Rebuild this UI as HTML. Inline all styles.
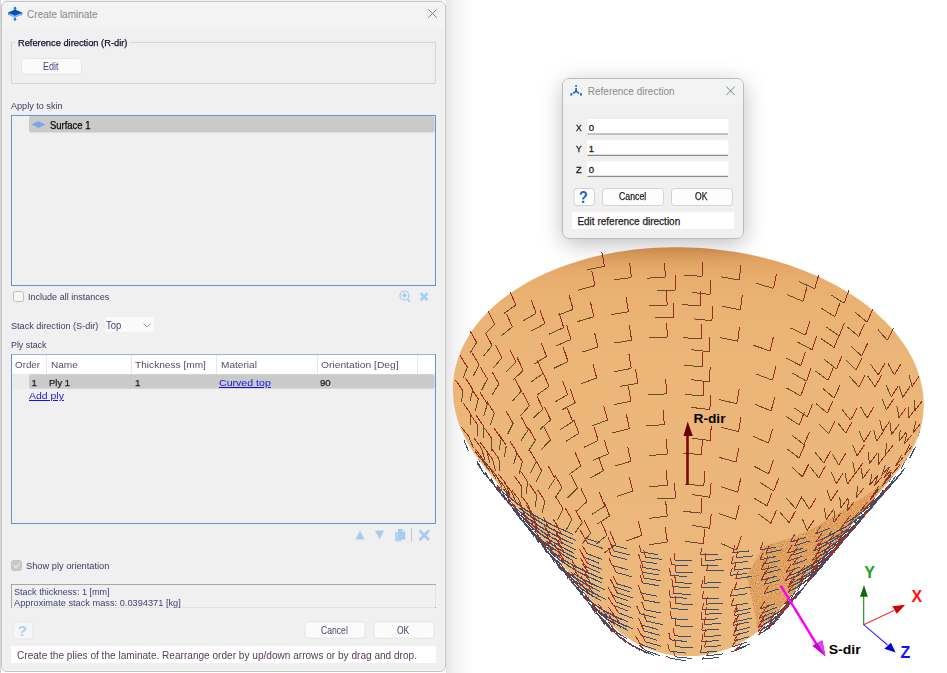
<!DOCTYPE html>
<html><head><meta charset="utf-8">
<style>
html,body{margin:0;padding:0;}
body{width:947px;height:673px;overflow:hidden;position:relative;background:#fff;font-family:"Liberation Sans", sans-serif;}
.t{position:absolute;white-space:pre;line-height:1;transform-origin:0 0;}
.abs{position:absolute;box-sizing:border-box;}
</style></head><body>
<div class="abs" style="left:446px;top:0;width:28px;height:673px;background:linear-gradient(to right,#e6e6e6,#efefef 20%,#f6f6f6 45%,rgba(255,255,255,0) 100%);"></div>
<svg class="abs" style="left:0;top:0" width="947" height="673" viewBox="0 0 947 673">
<defs>
 <linearGradient id="cg" x1="0" y1="246" x2="0" y2="660" gradientUnits="userSpaceOnUse">
  <stop offset="0" stop-color="#da9551"/>
  <stop offset="0.03" stop-color="#e1a260"/>
  <stop offset="0.07" stop-color="#e7ad6c"/>
  <stop offset="0.14" stop-color="#eab374"/>
  <stop offset="0.3" stop-color="#ebb678"/>
  <stop offset="1" stop-color="#ecb87c"/>
 </linearGradient>
 <clipPath id="cc"><path d="M479.8,461.1 L476.2,456.3 L472.9,451.5 L469.7,446.6 L466.9,441.6 L464.3,436.6 L461.9,431.5 L459.8,426.3 L458.0,421.2 L456.5,416.0 L455.2,410.8 L454.2,405.5 L453.5,400.3 L453.1,395.0 L452.9,389.8 L453.0,384.7 L453.4,379.6 L454.0,374.5 L455.0,369.4 L456.2,364.4 L457.7,359.4 L459.4,354.5 L461.4,349.6 L463.7,344.7 L466.3,340.0 L469.1,335.3 L472.1,330.6 L475.4,326.1 L479.0,321.6 L482.8,317.2 L486.9,312.9 L491.1,308.7 L495.7,304.6 L500.4,300.6 L505.4,296.8 L510.5,293.0 L515.9,289.4 L521.5,285.9 L527.3,282.5 L533.3,279.3 L539.4,276.2 L545.8,273.2 L552.3,270.4 L558.9,267.7 L565.7,265.2 L572.7,262.9 L579.8,260.7 L587.0,258.6 L594.3,256.7 L601.7,255.0 L609.3,253.5 L616.9,252.1 L624.6,250.9 L632.4,249.8 L640.3,249.0 L648.2,248.3 L656.2,247.7 L664.2,247.4 L672.2,247.2 L680.2,247.2 L688.3,247.4 L696.4,247.8 L704.4,248.3 L712.4,249.0 L720.4,249.9 L728.4,250.9 L736.3,252.1 L744.2,253.5 L752.0,255.1 L759.7,256.8 L767.3,258.7 L774.9,260.8 L782.3,263.0 L789.6,265.3 L796.8,267.9 L803.9,270.5 L810.9,273.4 L817.7,276.3 L824.3,279.4 L830.8,282.7 L837.2,286.1 L843.3,289.6 L849.3,293.2 L855.1,297.0 L860.7,300.8 L866.1,304.8 L871.2,308.9 L876.2,313.1 L880.9,317.4 L885.5,321.8 L889.7,326.3 L893.8,330.8 L897.6,335.5 L901.2,340.2 L904.5,345.0 L907.5,349.8 L910.3,354.7 L912.9,359.6 L915.2,364.6 L917.2,369.7 L918.9,374.7 L920.4,379.8 L921.6,384.9 L922.6,390.0 L923.2,395.1 L923.6,400.3 L923.7,405.4 L923.5,410.4 L923.1,415.3 L922.4,420.3 L921.4,425.2 L920.1,430.1 L918.6,435.0 L916.8,439.8 L914.7,444.6 L912.3,449.3 L909.7,454.0 L906.9,458.6 L903.7,463.1 L900.4,467.5 L896.8,471.9 L890.6,479.1 L884.4,486.3 L878.2,493.5 L872.0,500.7 L865.8,507.9 L859.7,515.1 L853.5,522.3 L847.3,529.6 L841.1,536.8 L834.9,544.1 L828.8,551.3 L822.6,558.6 L816.4,565.9 L810.2,573.2 L804.0,580.5 L797.9,587.8 L791.7,595.1 L785.5,602.5 L779.3,609.8 L773.1,617.1 L769.5,620.4 L766.2,623.9 L762.7,627.3 L759.0,630.5 L755.2,633.5 L751.3,636.4 L747.3,639.1 L743.2,641.6 L738.9,643.9 L734.6,646.0 L730.1,648.0 L725.6,649.7 L721.0,651.2 L716.4,652.6 L711.6,653.7 L706.9,654.6 L702.1,655.3 L697.3,655.9 L692.5,656.1 L687.6,656.2 L682.8,656.1 L677.9,655.7 L673.1,655.2 L668.3,654.4 L663.6,653.4 L658.9,652.2 L654.3,650.8 L649.7,649.2 L645.2,647.4 L640.8,645.4 L636.5,643.2 L632.2,640.9 L628.1,638.3 L624.1,635.6 L620.3,632.7 L616.5,629.6 L612.9,626.3 L609.5,622.9 L606.2,619.4 L603.5,615.4 L597.3,607.7 L591.1,600.1 L584.9,592.5 L578.7,584.8 L572.6,577.1 L566.4,569.5 L560.2,561.8 L554.0,554.1 L547.8,546.4 L541.7,538.7 L535.5,531.0 L529.3,523.2 L523.1,515.5 L516.9,507.8 L510.8,500.0 L504.6,492.2 L498.4,484.5 L492.2,476.7 L486.0,468.9 L479.8,461.1Z"/></clipPath>
 <clipPath id="pc"><path d="M747,575 L764,546 L788,539 L811,529.5 L835,515 L854,503 L873,491 L892,476 L940,476 L940,640 L760,640 Z"/></clipPath>
</defs>
<path d="M479.8,461.1 L476.2,456.3 L472.9,451.5 L469.7,446.6 L466.9,441.6 L464.3,436.6 L461.9,431.5 L459.8,426.3 L458.0,421.2 L456.5,416.0 L455.2,410.8 L454.2,405.5 L453.5,400.3 L453.1,395.0 L452.9,389.8 L453.0,384.7 L453.4,379.6 L454.0,374.5 L455.0,369.4 L456.2,364.4 L457.7,359.4 L459.4,354.5 L461.4,349.6 L463.7,344.7 L466.3,340.0 L469.1,335.3 L472.1,330.6 L475.4,326.1 L479.0,321.6 L482.8,317.2 L486.9,312.9 L491.1,308.7 L495.7,304.6 L500.4,300.6 L505.4,296.8 L510.5,293.0 L515.9,289.4 L521.5,285.9 L527.3,282.5 L533.3,279.3 L539.4,276.2 L545.8,273.2 L552.3,270.4 L558.9,267.7 L565.7,265.2 L572.7,262.9 L579.8,260.7 L587.0,258.6 L594.3,256.7 L601.7,255.0 L609.3,253.5 L616.9,252.1 L624.6,250.9 L632.4,249.8 L640.3,249.0 L648.2,248.3 L656.2,247.7 L664.2,247.4 L672.2,247.2 L680.2,247.2 L688.3,247.4 L696.4,247.8 L704.4,248.3 L712.4,249.0 L720.4,249.9 L728.4,250.9 L736.3,252.1 L744.2,253.5 L752.0,255.1 L759.7,256.8 L767.3,258.7 L774.9,260.8 L782.3,263.0 L789.6,265.3 L796.8,267.9 L803.9,270.5 L810.9,273.4 L817.7,276.3 L824.3,279.4 L830.8,282.7 L837.2,286.1 L843.3,289.6 L849.3,293.2 L855.1,297.0 L860.7,300.8 L866.1,304.8 L871.2,308.9 L876.2,313.1 L880.9,317.4 L885.5,321.8 L889.7,326.3 L893.8,330.8 L897.6,335.5 L901.2,340.2 L904.5,345.0 L907.5,349.8 L910.3,354.7 L912.9,359.6 L915.2,364.6 L917.2,369.7 L918.9,374.7 L920.4,379.8 L921.6,384.9 L922.6,390.0 L923.2,395.1 L923.6,400.3 L923.7,405.4 L923.5,410.4 L923.1,415.3 L922.4,420.3 L921.4,425.2 L920.1,430.1 L918.6,435.0 L916.8,439.8 L914.7,444.6 L912.3,449.3 L909.7,454.0 L906.9,458.6 L903.7,463.1 L900.4,467.5 L896.8,471.9 L890.6,479.1 L884.4,486.3 L878.2,493.5 L872.0,500.7 L865.8,507.9 L859.7,515.1 L853.5,522.3 L847.3,529.6 L841.1,536.8 L834.9,544.1 L828.8,551.3 L822.6,558.6 L816.4,565.9 L810.2,573.2 L804.0,580.5 L797.9,587.8 L791.7,595.1 L785.5,602.5 L779.3,609.8 L773.1,617.1 L769.5,620.4 L766.2,623.9 L762.7,627.3 L759.0,630.5 L755.2,633.5 L751.3,636.4 L747.3,639.1 L743.2,641.6 L738.9,643.9 L734.6,646.0 L730.1,648.0 L725.6,649.7 L721.0,651.2 L716.4,652.6 L711.6,653.7 L706.9,654.6 L702.1,655.3 L697.3,655.9 L692.5,656.1 L687.6,656.2 L682.8,656.1 L677.9,655.7 L673.1,655.2 L668.3,654.4 L663.6,653.4 L658.9,652.2 L654.3,650.8 L649.7,649.2 L645.2,647.4 L640.8,645.4 L636.5,643.2 L632.2,640.9 L628.1,638.3 L624.1,635.6 L620.3,632.7 L616.5,629.6 L612.9,626.3 L609.5,622.9 L606.2,619.4 L603.5,615.4 L597.3,607.7 L591.1,600.1 L584.9,592.5 L578.7,584.8 L572.6,577.1 L566.4,569.5 L560.2,561.8 L554.0,554.1 L547.8,546.4 L541.7,538.7 L535.5,531.0 L529.3,523.2 L523.1,515.5 L516.9,507.8 L510.8,500.0 L504.6,492.2 L498.4,484.5 L492.2,476.7 L486.0,468.9 L479.8,461.1Z" fill="url(#cg)"/>
<filter id="spk" x="740" y="470" width="200" height="170" filterUnits="userSpaceOnUse" primitiveUnits="userSpaceOnUse" color-interpolation-filters="sRGB">
 <feTurbulence type="fractalNoise" baseFrequency="0.9" numOctaves="1" seed="3" result="n"/>
 <feColorMatrix in="n" type="matrix" values="0 0 0 0 0.80  0 0 0 0 0.50  0 0 0 0 0.22  0 0 0 -3 1.75" />
</filter>
<g clip-path="url(#cc)">
 <path d="M747,575 L764,546 L788,539 L811,529.5 L835,515 L854,503 L873,491 L892,476 L940,476 L940,640 L760,640 Z" fill="#dc9a55" opacity="0.3"/>
 <g clip-path="url(#pc)"><rect x="740" y="470" width="200" height="170" filter="url(#spk)"/></g>
</g>
<g fill="none" stroke-width="1" stroke-linecap="butt" shape-rendering="crispEdges">
 <path d="M702.5,276.4L684.1,275.0 M739.2,280.1L721.2,276.8 M773.5,288.5L756.5,283.3 M803.0,301.4L787.2,294.7 M834.9,316.6L821.2,308.3 M858.7,336.4L847.2,326.9 M894.4,374.9L888.0,363.6 M902.7,397.5L899.1,385.8 M908.4,418.4L908.0,406.9 M904.2,444.2L906.9,432.9 M895.8,465.9L901.5,455.1 M882.1,485.9L890.6,475.9 M482.1,457.8L488.4,469.3 M470.3,413.1L470.6,425.2 M472.9,389.4L470.0,401.1 M479.1,364.7L473.4,375.7 M492.1,345.5L483.8,355.8 M512.3,326.8L501.2,335.9 M536.2,313.3L522.9,321.0 M595.0,285.6L578.3,290.1 M631.5,277.5L613.6,279.9 M665.3,277.5L647.0,278.1 M814.7,288.8L799.3,281.7 M844.1,303.2L830.6,294.7 M867.0,322.2L855.5,312.5 M887.2,340.2L878.1,329.7 M912.2,386.3L908.9,374.7 M914.4,411.4L914.1,399.7 M913.1,432.7L915.8,421.4 M904.7,454.8L910.2,444.0 M891.8,474.5L900.1,464.4 M481.9,460.0L489.6,471.1 M468.7,436.5L473.6,448.2 M462.7,390.5L461.6,402.4 M467.3,367.0L463.2,378.3 M476.7,342.6L469.8,353.3 M494.7,324.1L485.1,333.9 M515.8,305.1L503.7,313.6 M604.5,266.2L587.3,269.9 M700.5,305.9L682.1,304.6 M740.4,309.9L722.5,306.3 M805.5,335.2L790.4,327.9 M834.1,347.5L821.1,338.8 M856.1,369.9L845.7,359.8 M875.1,386.7L867.4,375.8 M886.5,409.9L881.9,398.4 M891.4,434.7L890.2,423.2 M884.1,478.2L889.4,467.2 M870.1,499.8L878.4,489.7 M495.9,475.3L502.1,486.7 M487.0,451.5L489.8,463.4 M483.6,426.1L483.1,438.1 M487.4,404.0L483.8,415.7 M499.0,383.9L492.2,394.7 M516.0,362.2L506.2,371.8 M563.7,327.6L549.0,334.2 M593.9,316.7L577.5,321.6 M628.4,311.8L610.7,314.7 M667.2,305.4L648.8,306.0 M710.2,294.4L691.8,292.5 M839.2,335.8L826.2,327.0 M861.5,356.0L850.9,346.0 M878.3,374.9L870.3,364.0 M891.3,396.9L886.2,385.4 M899.0,417.6L896.9,406.1 M899.1,441.2L900.2,429.8 M884.0,482.6L891.2,472.1 M489.8,468.1L496.3,479.5 M481.2,447.7L484.9,459.6 M477.2,424.2L477.7,436.2 M478.2,398.8L475.5,410.6 M487.4,379.0L481.7,390.0 M502.1,357.7L493.4,367.7 M544.9,323.6L531.4,331.1 M573.1,309.4L557.6,315.3 M675.5,290.1L657.1,290.2 M701.5,339.0L683.0,337.6 M737.7,341.2L719.8,337.6 M770.2,351.0L753.5,345.3 M800.9,365.7L786.0,358.1 M828.1,380.3L815.6,371.2 M867.1,417.9L860.6,406.9 M876.6,441.2L873.6,429.8 M878.3,464.4L878.8,452.9 M874.3,485.9L878.2,474.7 M505.3,483.0L509.9,494.7 M498.9,458.7L500.0,470.7 M501.2,438.7L499.0,450.5 M521.3,391.1L512.4,401.2 M542.9,373.5L531.0,382.1 M568.0,361.4L553.7,368.4 M598.1,347.1L581.8,352.2 M631.6,340.2L613.9,343.1 M667.4,337.3L649.0,338.0 M711.9,320.8L693.5,318.8 M812.1,349.8L797.6,342.0 M836.5,368.9L824.3,359.6 M858.9,386.9L849.5,376.4 M882.7,431.4L879.6,419.9 M885.7,454.7L886.3,443.2 M881.7,475.7L885.4,464.5 M871.6,496.9L878.5,486.4 M503.6,485.6L510.1,497.0 M492.7,459.3L495.6,471.2 M492.0,438.9L491.6,450.9 M494.3,413.2L490.5,424.8 M523.3,370.4L513.1,379.9 M546.5,356.3L533.7,364.3 M571.0,339.4L556.1,345.9 M673.9,317.6L655.5,317.9 M702.3,366.8L683.8,365.2 M772.5,380.2L756.2,374.1 M800.8,396.0L786.6,388.0 M827.3,413.2L816.1,403.6 M845.7,433.1L837.6,422.5 M857.1,456.0L852.6,444.6 M862.3,479.0L861.7,467.5 M519.0,499.6L523.3,511.3 M517.1,452.4L513.7,464.0 M528.3,429.8L521.0,440.6 M543.0,409.0L532.6,418.6 M567.7,394.5L554.4,402.3 M596.7,378.1L581.0,383.7 M631.3,368.5L613.8,371.7 M709.1,351.6L690.7,349.7 M806.5,381.2L792.4,373.1 M834.1,398.1L822.8,388.4 M850.5,420.2L842.2,409.6 M863.7,442.0L858.9,430.7 M869.5,463.6L868.1,452.1 M869.6,485.4L872.0,474.0 M511.7,492.1L516.6,503.7 M506.4,445.5L504.1,457.3 M513.1,423.3L507.5,434.5 M529.3,405.8L520.3,416.0 M549.0,386.5L537.0,395.1 M703.0,396.0L684.6,394.3 M736.8,403.7L719.2,399.6 M771.1,410.9L755.2,404.4 M799.4,425.0L786.0,416.5 M838.7,464.9L832.3,453.8 M847.6,484.1L844.8,472.6 M847.0,511.0L848.8,499.5 M528.9,506.2L531.4,518.1 M527.8,481.9L526.1,493.8 M536.3,461.5L530.5,472.7 M550.4,440.1L540.9,450.0 M572.6,421.7L559.8,429.9 M631.0,401.1L613.7,404.8 M666.6,393.9L648.3,394.8 M709.3,381.8L690.9,379.7 M807.4,416.8L794.4,408.1 M828.8,433.6L818.8,423.5 M855.4,473.6L852.7,462.1 M856.3,497.5L857.7,486.0 M521.5,486.1L521.9,498.1 M522.4,461.7L519.1,473.4 M535.5,440.5L528.0,451.3 M550.6,419.9L540.0,429.4 M575.1,402.7L561.4,410.2 M637.8,383.4L620.1,386.4 M738.5,431.7L721.1,427.2 M768.4,443.1L753.0,436.2 M799.0,458.0L786.9,448.9 M818.8,477.9L810.6,467.3 M830.7,500.9L826.9,489.4 M833.8,522.4L834.4,510.9 M544.9,501.0L542.2,512.8 M555.2,478.6L547.9,489.4 M598.3,440.5L583.8,447.4 M629.3,428.6L612.4,432.8 M664.3,424.6L646.1,426.0 M709.8,409.6L691.5,407.4 M804.0,444.5L791.9,435.4 M823.9,463.1L815.2,452.7 M836.3,483.6L831.4,472.3 M840.4,508.4L839.9,496.8 M536.8,495.2L535.1,507.1 M541.7,470.6L536.0,481.8 M578.9,433.3L565.9,441.4 M607.6,420.1L591.8,425.9 M701.6,454.7L683.2,453.0 M736.1,462.0L718.9,457.3 M768.6,473.8L754.0,466.2 M809.4,509.2L802.5,498.2 M563.1,508.8L557.6,520.1 M577.4,488.1L567.5,497.9 M603.5,470.9L589.4,478.2 M631.0,461.3L614.4,466.1 M667.4,454.1L649.2,455.5 M710.1,440.6L691.8,438.2 M802.4,476.8L791.8,467.0 M826.3,519.4L824.4,507.9 M562.0,487.8L554.5,498.5 M580.8,465.8L569.0,474.7 M608.5,453.8L593.4,460.3 M703.8,486.0L685.4,484.0 M737.7,492.1L721.0,486.7 M767.0,506.0L753.5,497.7 M789.2,522.7L780.0,512.4 M582.3,522.7L574.6,533.3 M604.8,506.1L592.0,514.4 M632.8,491.1L616.5,496.4 M667.5,485.1L649.3,486.8 M773.7,491.1L760.3,482.7 M795.7,508.6L786.4,498.3 M807.1,530.5L802.5,519.2 M571.9,519.5L565.8,530.7 M587.0,501.5L576.6,511.1 M701.1,513.1L682.7,511.2 M735.6,519.3L719.2,513.6 M607.1,535.1L595.9,544.3 M667.2,516.2L649.2,518.3 M709.8,497.2L691.7,494.5 M770.8,523.2L758.7,514.1 M590.6,533.1L582.3,543.6 M609.6,516.0L596.8,524.3 M675.4,498.0L657.1,498.9 M703.3,543.7L685.1,541.3 M736.4,550.2L721.0,543.5 M667.4,542.1L649.4,544.6 M709.6,528.3L691.6,525.3 M615.6,544.6L603.6,553.4 M641.9,535.5L625.8,541.0" stroke="#6e4a2a"/>
 <path d="M702.5,276.4L703.0,261.6 M739.2,280.1L740.9,265.5 M773.5,288.5L776.4,274.1 M803.0,301.4L806.9,287.4 M834.9,316.6L839.9,303.2 M858.7,336.4L864.5,323.6 M894.4,374.9L901.3,363.4 M902.7,397.5L909.9,386.7 M908.4,418.4L915.8,408.6 M904.2,444.2L911.5,435.2 M895.8,465.9L902.8,457.6 M882.1,485.9L888.6,478.3 M482.1,457.8L475.2,449.0 M470.3,413.1L462.9,402.7 M472.9,389.4L465.6,378.3 M479.1,364.7L472.1,352.9 M492.1,345.5L485.5,333.1 M512.3,326.8L506.4,313.7 M536.2,313.3L531.1,299.7 M595.0,285.6L591.9,271.2 M631.5,277.5L629.6,262.8 M665.3,277.5L664.6,262.7 M814.7,288.8L818.8,274.9 M844.1,303.2L849.1,289.8 M867.0,322.2L872.8,309.4 M887.2,340.2L893.6,328.1 M912.2,386.3L919.4,375.7 M914.4,411.4L921.8,401.6 M913.1,432.7L920.4,423.8 M904.7,454.8L911.7,446.5 M891.8,474.5L898.4,466.8 M481.9,460.0L475.2,451.5 M468.7,436.5L461.6,427.2 M462.7,390.5L455.4,379.8 M467.3,367.0L460.1,355.6 M476.7,342.6L469.9,330.6 M494.7,324.1L488.4,311.4 M515.8,305.1L510.2,291.8 M604.5,266.2L601.8,251.7 M700.5,305.9L701.0,291.1 M740.4,309.9L742.3,295.3 M805.5,335.2L809.7,321.4 M834.1,347.5L839.4,334.3 M856.1,369.9L862.2,357.4 M875.1,386.7L881.8,374.9 M886.5,409.9L893.6,399.0 M891.4,434.7L898.8,424.7 M884.1,478.2L891.2,469.8 M870.1,499.8L876.7,492.1 M495.9,475.3L489.0,466.4 M487.0,451.5L479.7,441.7 M483.6,426.1L476.2,415.5 M487.4,404.0L480.1,392.6 M499.0,383.9L492.1,371.8 M516.0,362.2L509.8,349.4 M563.7,327.6L559.2,313.6 M593.9,316.7L590.5,302.4 M628.4,311.8L626.2,297.2 M667.2,305.4L666.4,290.7 M710.2,294.4L710.9,279.6 M839.2,335.8L844.5,322.6 M861.5,356.0L867.5,343.5 M878.3,374.9L885.0,363.0 M891.3,396.9L898.4,385.7 M899.0,417.6L906.3,407.5 M899.1,441.2L906.4,431.8 M884.0,482.6L890.8,474.6 M489.8,468.1L482.9,459.3 M481.2,447.7L474.0,438.2 M477.2,424.2L469.8,413.8 M478.2,398.8L470.9,387.6 M487.4,379.0L480.4,367.3 M502.1,357.7L495.6,345.2 M544.9,323.6L539.9,309.9 M573.1,309.4L569.1,295.3 M675.5,290.1L675.1,275.4 M701.5,339.0L702.0,324.3 M737.7,341.2L739.6,326.7 M770.2,351.0L773.4,336.8 M800.9,365.7L805.3,352.0 M828.1,380.3L833.5,367.2 M867.1,417.9L874.0,406.7 M876.6,441.2L883.9,430.8 M878.3,464.4L885.7,454.8 M874.3,485.9L881.5,477.2 M505.3,483.0L498.2,473.8 M498.9,458.7L491.5,448.5 M501.2,438.7L493.8,427.6 M521.3,391.1L514.9,378.5 M542.9,373.5L537.3,360.3 M568.0,361.4L563.3,347.5 M598.1,347.1L594.6,332.8 M631.6,340.2L629.3,325.5 M667.4,337.3L666.6,322.6 M711.9,320.8L712.8,306.1 M812.1,349.8L816.7,336.2 M836.5,368.9L842.0,355.9 M858.9,386.9L865.2,374.6 M882.7,431.4L889.9,421.0 M885.7,454.7L893.1,445.2 M881.7,475.7L888.9,466.9 M871.6,496.9L878.4,488.9 M503.6,485.6L496.7,476.8 M492.7,459.3L485.4,449.5 M492.0,438.9L484.6,428.3 M494.3,413.2L487.1,401.7 M523.3,370.4L517.1,357.6 M546.5,356.3L541.2,342.8 M571.0,339.4L566.7,325.4 M673.9,317.6L673.4,302.8 M702.3,366.8L702.9,352.1 M772.5,380.2L776.0,366.2 M800.8,396.0L805.5,382.5 M827.3,413.2L833.2,400.6 M845.7,433.1L852.3,421.4 M857.1,456.0L864.2,445.1 M862.3,479.0L869.6,469.2 M519.0,499.6L511.8,490.3 M517.1,452.4L509.8,441.0 M528.3,429.8L521.5,417.5 M543.0,409.0L536.9,395.9 M567.7,394.5L562.6,380.8 M596.7,378.1L592.9,363.8 M631.3,368.5L628.9,353.9 M709.1,351.6L709.9,336.9 M806.5,381.2L811.2,367.7 M834.1,398.1L839.9,385.3 M850.5,420.2L857.1,408.4 M863.7,442.0L870.8,431.1 M869.5,463.6L876.9,453.6 M869.6,485.4L876.9,476.3 M511.7,492.1L504.6,482.9 M506.4,445.5L499.1,434.4 M513.1,423.3L506.1,411.3 M529.3,405.8L522.8,393.0 M549.0,386.5L543.3,373.2 M703.0,396.0L703.7,381.3 M736.8,403.7L739.1,389.3 M771.1,410.9L774.9,397.0 M799.4,425.0L804.4,411.8 M838.7,464.9L845.6,453.5 M847.6,484.1L854.9,473.7 M847.0,511.0L854.3,501.7 M528.9,506.2L521.6,496.4 M527.8,481.9L520.5,471.0 M536.3,461.5L529.3,449.5 M550.4,440.1L544.1,427.2 M572.6,421.7L567.3,408.0 M631.0,401.1L628.3,386.5 M666.6,393.9L665.7,379.1 M709.3,381.8L710.2,367.1 M807.4,416.8L812.6,403.8 M828.8,433.6L835.0,421.3 M855.4,473.6L862.7,463.2 M856.3,497.5L863.6,488.1 M521.5,486.1L514.1,475.8 M522.4,461.7L515.2,450.4 M535.5,440.5L528.7,428.2 M550.6,419.9L544.6,406.8 M575.1,402.7L570.2,388.8 M637.8,383.4L635.5,368.8 M738.5,431.7L741.0,417.4 M768.4,443.1L772.5,429.4 M799.0,458.0L804.6,445.1 M818.8,477.9L825.4,466.1 M830.7,500.9L837.9,490.1 M833.8,522.4L841.2,512.8 M544.9,501.0L537.6,489.9 M555.2,478.6L548.4,466.4 M598.3,440.5L593.8,426.5 M629.3,428.6L626.3,414.0 M664.3,424.6L663.1,409.8 M709.8,409.6L710.8,394.9 M804.0,444.5L809.6,431.7 M823.9,463.1L830.4,451.2 M836.3,483.6L843.4,472.6 M840.4,508.4L847.8,498.5 M536.8,495.2L529.5,484.4 M541.7,470.6L534.7,458.7 M578.9,433.3L573.7,419.6 M607.6,420.1L603.7,405.8 M701.6,454.7L702.3,440.0 M736.1,462.0L738.8,447.7 M768.6,473.8L773.2,460.2 M809.4,509.2L816.3,497.6 M563.1,508.8L556.0,497.0 M577.4,488.1L571.2,475.2 M603.5,470.9L598.7,457.0 M631.0,461.3L627.7,446.9 M667.4,454.1L666.2,439.3 M710.1,440.6L711.3,425.9 M802.4,476.8L808.5,464.4 M826.3,519.4L833.7,509.1 M562.0,487.8L555.3,475.5 M580.8,465.8L575.1,452.4 M608.5,453.8L604.2,439.7 M703.8,486.0L704.8,471.3 M737.7,492.1L740.8,477.9 M767.0,506.0L772.0,492.7 M789.2,522.7L795.6,510.6 M582.3,522.7L575.7,510.4 M604.8,506.1L599.4,492.5 M632.8,491.1L629.2,476.8 M667.5,485.1L666.2,470.4 M773.7,491.1L778.8,477.8 M795.7,508.6L802.1,496.4 M807.1,530.5L814.3,519.6 M571.9,519.5L564.9,507.6 M587.0,501.5L581.0,488.5 M701.1,513.1L702.0,498.4 M735.6,519.3L739.1,505.2 M607.1,535.1L601.2,521.9 M667.2,516.2L665.7,501.4 M709.8,497.2L711.2,482.6 M770.8,523.2L776.4,510.3 M590.6,533.1L584.1,520.6 M609.6,516.0L604.3,502.5 M675.4,498.0L674.6,483.2 M703.3,543.7L704.9,528.8 M736.4,550.2L741.3,536.3 M667.4,542.1L665.2,527.2 M709.6,528.3L711.3,513.7 M615.6,544.6L610.0,531.3 M641.9,535.5L638.2,521.1" stroke="#9a2b1c"/>
 <path d="M674.7,560.0L691.7,560.9 M645.5,557.2L662.2,559.5 M613.7,551.0L629.8,554.8 M587.5,543.2L602.7,548.4 M561.7,533.9L575.7,540.4 M549.3,527.8L562.7,534.9 M555.4,530.9L569.1,537.7 M543.4,524.6L556.4,531.9 M535.5,519.2L548.1,526.9 M524.6,512.0L536.3,520.2 M530.0,515.7L542.1,523.6 M519.4,508.2L530.7,516.7 M497.9,489.4L506.8,499.0 M490.3,480.6L498.2,490.6 M494.0,485.1L502.4,494.8 M881.3,495.6L889.9,486.7 M885.1,491.6L893.2,482.5 M863.4,511.2L874.0,503.2 M872.6,503.8L882.3,495.3 M868.1,507.5L878.3,499.3 M876.9,499.9L886.1,491.2 M844.0,523.7L856.3,516.6 M854.8,517.0L866.2,509.4 M849.5,520.4L861.4,513.1 M859.9,513.5L870.9,505.7 M794.5,545.8L809.5,541.0 M766.0,553.2L782.0,549.7 M736.0,557.9L752.6,555.9 M705.1,560.3L722.0,559.8 M641.1,552.0L657.7,554.5 M611.2,544.8L627.3,548.7 M584.4,537.8L599.6,543.0 M558.8,527.9L572.9,534.3 M546.5,522.0L559.9,528.9 M552.5,525.0L566.3,531.7 M540.6,518.8L553.7,526.0 M533.0,514.3L545.6,521.9 M522.0,507.2L533.9,515.4 M527.4,510.8L539.7,518.7 M516.8,503.6L528.3,511.9 M510.8,498.5L521.9,507.1 M501.3,490.5L511.5,499.6 M506.0,494.6L516.6,503.4 M496.9,486.4L506.6,495.7 M881.3,494.1L890.8,485.6 M889.4,486.3L898.0,477.4 M885.4,490.3L894.5,481.5 M893.1,482.3L901.2,473.2 M860.2,511.0L871.6,503.4 M869.9,504.0L880.5,495.9 M865.2,507.5L876.1,499.7 M874.5,500.3L884.6,492.1 M815.6,533.8L829.8,528.2 M790.4,541.9L805.7,537.5 M760.0,550.0L776.1,547.0 M732.8,552.7L749.5,550.9 M700.8,554.9L717.8,554.6 M675.7,572.0L692.7,572.9 M643.0,567.6L659.6,570.2 M587.1,553.7L602.0,559.3 M562.5,543.1L576.1,549.9 M550.7,536.7L563.5,544.1 M556.5,540.0L569.7,547.1 M545.0,533.3L557.4,541.0 M538.7,529.1L550.6,537.2 M528.4,521.6L539.4,530.2 M533.4,525.4L544.9,533.8 M523.6,517.7L534.1,526.6 M519.8,514.6L529.8,523.6 M511.3,506.2L520.3,515.7 M515.4,510.4L524.9,519.7 M507.3,501.9L515.8,511.6 M859.5,519.2L869.2,510.7 M867.8,511.3L876.5,502.4 M863.7,515.3L873.0,506.6 M871.6,507.3L879.8,498.2 M818.3,545.8L831.6,539.4 M829.9,539.7L842.4,532.8 M824.2,542.8L837.1,536.1 M835.4,536.6L847.5,529.3 M792.6,555.2L807.3,550.2 M764.4,564.0L780.3,560.4 M734.0,570.1L750.6,568.0 M706.8,571.0L723.8,570.3 M671.4,564.8L688.4,565.9 M640.6,561.1L657.2,563.7 M611.4,555.5L627.3,559.6 M559.8,537.5L573.5,544.2 M548.0,531.2L560.9,538.6 M553.8,534.4L567.2,541.5 M542.3,527.9L554.9,535.5 M537.4,524.8L549.7,532.7 M527.0,517.5L538.3,525.9 M532.1,521.2L543.9,529.4 M522.0,513.7L532.9,522.4 M515.9,508.3L526.3,517.2 M507.1,500.1L516.5,509.4 M511.4,504.2L521.3,513.4 M502.9,495.8L511.9,505.4 M500.3,493.1L508.8,502.9 M496.7,488.7L504.6,498.7 M875.1,502.9L883.7,494.0 M878.8,498.9L886.9,489.8 M838.5,531.1L850.7,524.0 M849.0,524.5L860.4,516.9 M843.8,527.9L855.7,520.5 M854.0,521.1L864.9,513.2 M815.9,541.8L829.7,535.8 M828.0,536.1L841.0,529.6 M822.0,539.0L835.5,532.7 M833.7,533.1L846.4,526.3 M787.4,553.0L802.5,548.4 M760.0,559.8L776.0,556.5 M731.4,563.3L748.0,561.5 M701.3,565.4L718.3,565.1 M675.5,582.5L692.4,583.5 M644.0,578.0L660.6,580.7 M616.2,572.5L632.0,576.7 M587.7,563.6L602.2,569.5 M564.1,551.9L577.2,559.1 M552.6,545.1L564.9,553.0 M558.2,548.6L570.9,556.1 M547.2,541.5L559.0,549.7 M522.9,520.9L531.9,530.4 M519.0,516.6L527.4,526.3 M838.3,540.6L849.1,532.7 M847.6,533.2L857.4,524.7 M843.1,537.0L853.4,528.7 M851.9,529.3L861.1,520.6 M816.0,554.6L828.8,547.9 M827.1,548.3L839.0,540.9 M821.6,551.5L834.0,544.4 M832.3,544.9L843.8,537.2 M792.8,564.8L807.2,559.3 M765.1,573.4L780.7,569.4 M735.9,578.7L752.4,576.3 M704.0,583.1L720.9,582.5 M670.5,575.4L687.4,576.6 M642.3,572.3L658.9,575.0 M612.3,565.5L628.1,569.8 M584.4,557.4L599.0,563.2 M561.0,546.4L574.2,553.5 M549.7,539.7L562.0,547.5 M555.3,543.1L568.1,550.5 M544.3,536.2L556.2,544.3 M538.9,532.5L550.4,540.8 M529.2,524.8L539.6,533.7 M533.9,528.7L544.9,537.3 M524.6,520.9L534.6,529.9 M855.3,524.1L865.1,515.6 M863.6,516.3L872.3,507.4 M859.6,520.3L868.8,511.5 M867.4,512.3L875.5,503.1 M836.0,539.0L847.6,531.5 M845.9,532.0L856.6,524.0 M841.1,535.6L852.2,527.8 M850.6,528.4L860.8,520.1 M813.4,551.0L826.8,544.7 M825.1,545.0L837.7,538.1 M819.3,548.1L832.4,541.4 M830.6,541.9L842.8,534.7 M787.5,561.2L802.3,556.3 M760.9,570.0L776.8,566.4 M730.1,575.4L746.8,573.4 M673.9,593.5L690.8,594.6 M616.8,583.8L632.4,588.3 M588.3,572.6L602.4,578.8 M575.9,566.6L589.2,573.6 M582.0,569.7L595.7,576.3 M570.0,563.3L582.9,570.7 M564.1,559.9L576.5,567.6 M553.5,552.6L564.8,561.0 M558.7,556.3L570.5,564.4 M548.6,548.8L559.3,557.4 M545.8,546.6L556.1,555.5 M537.0,538.4L546.2,547.8 M541.3,542.6L551.0,551.7 M533.1,534.1L541.6,543.8 M834.1,549.0L843.9,540.5 M842.4,541.2L851.0,532.2 M838.4,545.2L847.6,536.4 M846.1,537.1L854.1,527.9 M813.6,563.2L825.8,556.0 M824.1,556.5L835.3,548.6 M819.0,559.9L830.7,552.4 M829.0,552.9L839.6,544.7 M789.2,575.9L803.2,570.1 M801.3,570.3L814.5,563.8 M795.3,573.2L809.0,567.0 M807.1,567.3L819.8,560.5 M764.4,584.2L779.8,579.9 M734.3,589.7L750.8,587.1 M672.7,586.6L689.6,587.7 M642.5,582.9L659.0,585.8 M586.0,566.8L600.2,573.0 M560.8,553.3L573.3,560.8 M550.0,546.2L561.5,554.4 M555.3,549.8L567.3,557.7 M544.9,542.4L556.0,550.9 M542.3,540.9L553.0,549.6 M533.3,532.9L542.9,542.2 M537.7,537.0L547.8,546.0 M529.2,528.7L538.2,538.2 M524.9,524.0L533.1,533.7 M850.6,531.6L859.2,522.6 M854.3,527.5L862.4,518.4 M833.2,546.7L844.1,538.7 M842.4,539.3L852.2,530.8 M837.9,543.1L848.3,534.8 M846.7,535.5L855.9,526.7 M812.2,560.4L824.9,553.5 M823.1,554.0L834.9,546.6 M817.7,557.3L830.0,550.1 M828.2,550.6L839.5,542.9 M785.9,572.3L800.4,566.9 M761.1,580.2L776.7,576.2 M701.7,587.6L718.7,587.1 M675.8,603.6L692.7,604.7 M643.9,600.0L660.3,603.1 M617.2,592.9L632.6,597.7 M591.0,583.2L604.7,589.8 M579.1,576.9L591.8,584.3 M584.9,580.1L598.2,587.2 M573.6,573.5L585.7,581.3 M549.4,553.8L558.6,563.2 M545.4,549.5L553.9,559.1 M828.7,557.2L837.5,548.2 M832.5,553.1L840.6,543.9 M811.7,571.0L823.0,563.2 M821.3,563.7L831.4,555.3 M816.6,567.4L827.3,559.3 M825.7,559.9L835.2,551.2 M789.0,584.3L802.5,578.0 M800.6,578.3L813.0,571.2 M794.9,581.4L807.9,574.6 M806.1,575.0L817.9,567.6 M764.2,593.5L779.3,588.8 M706.1,604.1L723.0,603.2 M670.2,597.0L687.2,598.3 M641.1,593.1L657.5,596.2 M614.4,586.9L629.7,591.8 M587.7,576.3L601.6,582.8 M575.8,570.2L588.7,577.4 M581.7,573.3L595.1,580.2 M570.1,566.9L582.6,574.5 M564.7,563.1L576.7,571.0 M554.5,555.7L565.4,564.2 M559.5,559.4L570.9,567.7 M549.7,551.8L560.0,560.6 M829.0,555.2L838.8,546.7 M837.1,547.4L845.8,538.4 M833.2,551.3L842.4,542.6 M840.8,543.3L848.8,534.1 M809.8,569.2L821.8,561.9 M819.9,562.4L830.9,554.5 M815.0,565.9L826.5,558.2 M824.7,558.8L835.0,550.6 M785.2,580.6L799.4,574.9 M797.5,575.1L810.7,568.6 M791.4,578.0L805.1,571.8 M803.2,572.1L816.0,565.3 M730.4,596.1L746.9,593.7 M702.5,598.6L719.5,598.0 M644.7,609.7L661.0,613.0 M616.2,602.1L631.2,607.5 M593.0,592.6L606.2,599.7 M581.8,585.9L593.8,593.8 M587.3,589.3L599.9,596.8 M576.6,582.2L588.0,590.5 M570.3,577.0L580.9,585.7 M561.4,568.8L570.6,578.2 M565.7,573.0L575.6,582.0 M557.4,564.6L565.9,574.2 M808.7,578.4L819.0,570.0 M817.3,570.6L826.2,561.6 M813.1,574.5L822.7,565.9 M821.1,566.5L829.3,557.3 M787.9,592.3L800.7,585.4 M798.9,585.7L810.4,578.1 M793.5,589.1L805.7,581.8 M803.9,582.2L814.8,574.2 M734.5,611.6L750.6,608.5 M705.4,614.2L722.3,613.2 M670.9,608.4L687.8,609.8 M612.7,595.3L627.6,600.7 M586.8,584.4L599.8,591.6 M575.3,577.5L587.3,585.5 M580.9,581.1L593.4,588.6 M570.0,573.8L581.3,582.1 M566.1,571.1L576.9,579.7 M556.9,562.9L566.3,572.2 M561.4,567.1L571.5,576.0 M552.8,558.6L561.5,568.2 M827.5,559.0L835.7,549.8 M810.2,574.9L821.0,566.8 M819.5,567.2L829.0,558.5 M815.0,571.1L825.2,562.7 M823.6,563.2L832.4,554.2 M788.1,587.6L801.4,581.1 M799.8,581.2L812.0,573.9 M794.1,584.5L806.8,577.6 M805.3,577.8L816.8,570.1 M731.1,605.9L747.5,603.2 M702.5,609.7L719.4,609.0 M675.8,625.7L692.8,626.9 M646.4,621.1L662.6,624.6 M618.5,612.8L633.0,618.5 M573.6,584.0L582.9,593.3 M569.7,579.8L578.1,589.4 M804.1,586.2L813.0,577.2 M807.9,582.1L816.0,572.8 M762.6,613.0L776.8,607.2 M735.6,621.6L751.5,618.0 M704.1,624.5L721.0,623.4 M671.5,618.5L688.3,620.0 M640.1,613.9L656.2,617.7 M613.1,605.2L627.7,611.0 M588.4,592.9L600.6,600.6 M577.8,585.5L588.7,594.0 M582.9,589.3L594.5,597.4 M572.9,581.4L583.1,590.3 M807.4,581.4L817.0,572.7 M815.5,573.1L823.5,563.9 M811.6,577.3L820.5,568.4 M760.0,609.0L774.7,603.8 M734.0,615.6L750.1,612.4 M701.1,619.6L718.0,618.9 M674.4,635.7L691.3,637.0 M644.2,631.1L660.0,635.2 M619.4,622.7L633.3,629.1 M607.6,616.6L620.2,624.0 M613.3,619.8L626.6,626.7 M602.1,613.2L614.0,621.1 M596.6,609.2L607.5,617.7 M587.6,601.4L596.8,610.6 M591.9,605.4L602.0,614.3 M583.7,597.2L592.0,606.8 M782.7,608.9L793.4,600.7 M791.5,601.2L800.4,592.2 M787.3,605.1L797.1,596.5 M795.3,597.1L803.3,587.7 M760.4,622.1L774.1,615.8 M772.1,616.0L784.4,608.7 M766.4,619.1L779.4,612.4 M777.4,612.6L788.9,604.9 M734.3,631.1L750.0,627.2 M704.2,636.7L721.0,635.5 M642.0,625.3L657.9,629.4 M614.4,615.7L628.3,622.2 M602.3,609.4L614.9,616.9 M608.2,612.7L621.5,619.6 M596.7,605.9L608.6,613.8 M590.1,600.8L601.2,609.2 M580.7,592.7L590.1,601.9 M585.2,596.8L595.5,605.7 M576.6,588.4L585.2,598.0 M784.3,604.2L795.8,596.5 M794.2,596.7L804.1,588.1 M789.4,600.6L800.1,592.4 M798.6,592.6L807.6,583.7 M759.2,618.1L773.4,612.4 M732.7,625.5L748.6,622.0 M701.9,630.3L718.8,629.3 M675.8,646.7L692.7,648.0 M645.2,641.7L660.7,646.2 M600.0,616.6L609.5,625.7 M596.0,612.4L604.4,622.0 M779.2,615.8L788.1,606.8 M758.3,631.5L771.1,624.5 M768.9,624.8L780.0,616.7 M763.8,628.2L775.7,620.7 M773.6,621.1L783.7,612.6 M734.1,641.0L749.5,636.5 M704.6,647.1L721.4,645.6 M670.3,639.8L687.1,641.6 M641.5,635.6L657.0,640.2 M614.9,623.3L628.0,630.4 M603.5,616.3L615.0,624.4 M609.0,619.9L621.4,627.5 M598.3,612.4L609.0,621.0 M779.3,614.1L789.5,605.6 M787.7,606.0L796.0,596.7 M783.7,610.1L793.0,601.3 M758.0,627.3L771.5,620.9 M769.7,620.9L781.6,613.4 M764.0,624.3L776.7,617.3 M774.9,617.4L786.0,609.4 M733.3,635.6L748.9,631.6 M701.7,641.7L718.6,640.6 M675.4,656.8L692.2,658.5 M645.3,650.4L660.2,655.7 M621.1,637.7L632.4,645.9 M611.7,629.6L620.7,638.9 M616.1,633.8L626.3,642.6 M735.4,649.6L749.8,644.0 M706.5,656.0L723.2,653.9 M669.6,651.0L686.2,653.2 M640.5,644.3L655.5,649.6 M615.8,631.4L627.6,639.3 M605.8,623.5L615.5,632.5 M610.6,627.5L621.4,636.0 M601.5,619.2L610.2,628.6 M776.2,619.7L784.3,610.4 M758.0,635.0L770.1,627.6 M768.2,627.6L778.3,619.1 M763.3,631.4L774.5,623.4 M772.6,623.6L781.6,614.6 M732.1,646.8L747.3,642.1 M700.5,652.5L717.4,651.3 M669.7,658.2L686.2,660.8 M640.5,649.3L654.3,655.7 M628.3,642.5L640.0,650.5 M634.1,646.1L646.9,653.3 M623.1,638.5L633.4,647.2 M731.4,652.0L745.8,646.4 M701.8,659.1L718.6,657.4" stroke="#3a4f6e"/>
 <path d="M674.7,560.0L674.1,552.7 M645.5,557.2L643.6,549.8 M613.7,551.0L610.5,543.3 M587.5,543.2L583.1,535.2 M561.7,533.9L556.1,525.4 M549.3,527.8L545.7,522.6 M535.5,519.2L528.9,510.1 M524.6,512.0L520.3,506.3 M497.9,489.4L489.5,478.9 M490.3,480.6L485.1,474.1 M881.3,495.6L889.7,485.8 M863.4,511.2L871.0,502.0 M872.6,503.8L877.4,498.1 M844.0,523.7L850.8,515.0 M854.8,517.0L859.1,511.7 M794.5,545.8L799.2,538.0 M766.0,553.2L769.4,545.7 M736.0,557.9L738.1,550.7 M705.1,560.3L705.8,553.1 M641.1,552.0L639.0,544.6 M611.2,544.8L608.0,537.2 M584.4,537.8L580.0,529.8 M558.8,527.9L553.3,519.4 M546.5,522.0L542.9,516.7 M533.0,514.3L526.4,505.2 M522.0,507.2L517.8,501.6 M510.8,498.5L503.4,488.7 M501.3,490.5L496.6,484.5 M881.3,494.1L889.4,484.6 M889.4,486.3L894.5,480.4 M860.2,511.0L867.5,502.1 M869.9,504.0L874.6,498.5 M815.6,533.8L821.0,525.8 M790.4,541.9L794.7,534.3 M760.0,550.0L763.0,542.6 M732.8,552.7L734.6,545.4 M700.8,554.9L701.3,547.7 M675.7,572.0L675.1,564.8 M643.0,567.6L640.9,560.2 M587.1,553.7L582.4,545.6 M562.5,543.1L556.6,534.4 M550.7,536.7L546.8,531.3 M538.7,529.1L531.7,519.8 M528.4,521.6L523.9,515.8 M519.8,514.6L511.9,504.5 M511.3,506.2L506.3,499.9 M859.5,519.2L867.5,509.7 M867.8,511.3L872.9,505.4 M818.3,545.8L824.4,537.4 M829.9,539.7L833.9,534.6 M792.6,555.2L797.4,547.3 M764.4,564.0L768.0,556.5 M734.0,570.1L736.1,562.8 M706.8,571.0L707.7,563.8 M671.4,564.8L670.7,557.5 M640.6,561.1L638.5,553.7 M611.4,555.5L607.9,547.7 M559.8,537.5L554.0,528.9 M548.0,531.2L544.2,525.9 M537.4,524.8L530.6,515.5 M527.0,517.5L522.6,511.8 M515.9,508.3L508.2,498.3 M507.1,500.1L502.1,493.9 M500.3,493.1L491.8,482.4 M875.1,502.9L883.6,493.0 M838.5,531.1L845.3,522.5 M849.0,524.5L853.4,519.2 M815.9,541.8L821.7,533.6 M828.0,536.1L831.7,531.1 M787.4,553.0L791.9,545.3 M760.0,559.8L763.2,552.4 M731.4,563.3L733.3,556.1 M701.3,565.4L701.9,558.3 M675.5,582.5L674.8,575.3 M644.0,578.0L641.8,570.5 M616.2,572.5L612.6,564.7 M587.7,563.6L582.6,555.3 M564.1,551.9L557.8,543.1 M552.6,545.1L548.5,539.6 M522.9,520.9L514.5,510.4 M838.3,540.6L845.9,531.5 M847.6,533.2L852.4,527.5 M816.0,554.6L822.4,546.1 M827.1,548.3L831.3,543.0 M792.8,564.8L798.1,556.8 M765.1,573.4L769.0,565.8 M735.9,578.7L738.3,571.4 M704.0,583.1L704.8,575.9 M670.5,575.4L669.6,568.1 M642.3,572.3L640.1,564.8 M612.3,565.5L608.7,557.7 M584.4,557.4L579.4,549.1 M561.0,546.4L554.8,537.5 M549.7,539.7L545.6,534.2 M538.9,532.5L531.7,523.0 M529.2,524.8L524.5,518.9 M855.3,524.1L863.4,514.6 M863.6,516.3L868.7,510.4 M836.0,539.0L843.1,530.1 M845.9,532.0L850.5,526.5 M813.4,551.0L819.4,542.7 M825.1,545.0L829.0,539.9 M787.5,561.2L792.2,553.4 M760.9,570.0L764.5,562.5 M730.1,575.4L732.2,568.1 M673.9,593.5L673.1,586.2 M616.8,583.8L612.9,576.0 M588.3,572.6L582.8,564.1 M575.9,566.6L572.2,561.3 M564.1,559.9L557.4,550.7 M553.5,552.6L549.1,546.9 M545.8,546.6L537.9,536.7 M537.0,538.4L532.1,532.2 M834.1,549.0L842.1,539.5 M842.4,541.2L847.4,535.2 M813.6,563.2L820.5,554.5 M824.1,556.5L828.6,551.0 M789.2,575.9L794.7,567.8 M801.3,570.3L805.1,565.3 M764.4,584.2L768.6,576.6 M734.3,589.7L736.8,582.3 M672.7,586.6L671.9,579.4 M642.5,582.9L640.1,575.5 M586.0,566.8L580.6,558.4 M560.8,553.3L554.1,544.2 M550.0,546.2L545.6,540.5 M542.3,540.9L534.6,531.1 M533.3,532.9L528.4,526.8 M524.9,524.0L516.3,513.2 M850.6,531.6L859.0,521.7 M833.2,546.7L840.8,537.5 M842.4,539.3L847.2,533.6 M812.2,560.4L818.7,551.8 M823.1,554.0L827.3,548.7 M785.9,572.3L791.0,564.3 M761.1,580.2L764.9,572.6 M701.7,587.6L702.4,580.4 M675.8,603.6L675.1,596.4 M643.9,600.0L641.2,592.5 M617.2,592.9L613.0,584.9 M591.0,583.2L585.1,574.6 M579.1,576.9L575.2,571.5 M549.4,553.8L541.1,543.4 M828.7,557.2L837.1,547.2 M811.7,571.0L819.0,561.9 M821.3,563.7L826.0,558.0 M789.0,584.3L795.1,576.0 M800.6,578.3L804.6,573.1 M764.2,593.5L768.7,585.7 M706.1,604.1L707.2,596.9 M670.2,597.0L669.2,589.7 M641.1,593.1L638.5,585.5 M614.4,586.9L610.2,579.0 M587.7,576.3L582.0,567.8 M575.8,570.2L572.0,564.8 M564.7,563.1L557.7,553.8 M554.5,555.7L549.9,549.8 M829.0,555.2L837.0,545.6 M837.1,547.4L842.2,541.4 M809.8,569.2L816.7,560.4 M819.9,562.4L824.4,556.9 M785.2,580.6L790.7,572.5 M797.5,575.1L801.2,570.1 M730.4,596.1L732.8,588.8 M702.5,598.6L703.4,591.4 M644.7,609.7L641.9,602.2 M616.2,602.1L611.5,594.0 M593.0,592.6L586.8,583.8 M581.8,585.9L577.6,580.3 M570.3,577.0L562.6,567.2 M561.4,568.8L556.4,562.6 M808.7,578.4L816.5,569.0 M817.3,570.6L822.3,564.6 M787.9,592.3L794.4,583.7 M798.9,585.7L803.2,580.3 M734.5,611.6L737.5,604.2 M705.4,614.2L706.5,607.0 M670.9,608.4L669.9,601.2 M612.7,595.3L608.0,587.3 M586.8,584.4L580.5,575.6 M575.3,577.5L571.1,571.9 M566.1,571.1L558.5,561.3 M556.9,562.9L552.0,556.8 M827.5,559.0L836.1,548.9 M810.2,574.9L817.8,565.6 M819.5,567.2L824.4,561.4 M788.1,587.6L794.2,579.2 M799.8,581.2L803.9,575.9 M731.1,605.9L733.7,598.5 M702.5,609.7L703.4,602.5 M675.8,625.7L674.9,618.5 M646.4,621.1L643.4,613.5 M618.5,612.8L613.4,604.6 M573.6,584.0L565.4,573.7 M804.1,586.2L812.5,576.3 M762.6,613.0L767.9,604.9 M735.6,621.6L739.1,614.1 M704.1,624.5L705.2,617.3 M671.5,618.5L670.3,611.3 M640.1,613.9L636.9,606.2 M613.1,605.2L608.0,596.9 M588.4,592.9L581.6,583.8 M577.8,585.5L573.2,579.7 M807.4,581.4L815.5,571.7 M815.5,573.1L820.7,567.0 M760.0,609.0L764.9,601.1 M734.0,615.6L737.1,608.2 M701.1,619.6L702.0,612.4 M674.4,635.7L673.3,628.4 M644.2,631.1L640.6,623.4 M619.4,622.7L613.7,614.3 M607.6,616.6L603.6,611.2 M596.6,609.2L589.1,599.6 M587.6,601.4L582.6,595.2 M782.7,608.9L790.4,599.5 M791.5,601.2L796.5,595.2 M760.4,622.1L766.2,613.8 M772.1,616.0L776.1,610.7 M734.3,631.1L738.0,623.5 M704.2,636.7L705.5,629.5 M642.0,625.3L638.5,617.6 M614.4,615.7L608.7,607.3 M602.3,609.4L598.4,604.0 M590.1,600.8L582.6,591.2 M580.7,592.7L575.8,586.6 M784.3,604.2L791.5,595.2 M794.2,596.7L799.0,590.9 M759.2,618.1L764.6,610.0 M732.7,625.5L736.0,618.0 M701.9,630.3L702.9,623.1 M675.8,646.7L674.7,639.4 M645.2,641.7L641.2,633.8 M600.0,616.6L591.8,606.4 M779.2,615.8L787.6,605.8 M758.3,631.5L764.8,622.8 M768.9,624.8L773.4,619.2 M734.1,641.0L738.3,633.3 M704.6,647.1L706.2,639.9 M670.3,639.8L668.8,632.5 M641.5,635.6L637.5,627.7 M614.9,623.3L608.7,614.6 M603.5,616.3L599.1,610.7 M779.3,614.1L787.2,604.6 M787.7,606.0L792.9,599.9 M758.0,627.3L764.0,619.0 M769.7,620.9L773.9,615.6 M733.3,635.6L737.1,628.0 M701.7,641.7L702.8,634.5 M675.4,656.8L673.6,652.4 M645.3,650.4L639.3,645.1 M621.1,637.7L612.0,630.6 M611.7,629.6L605.5,624.6 M735.4,649.6L742.0,644.4 M706.5,656.0L708.9,651.1 M669.6,651.0L667.7,643.7 M640.5,644.3L635.8,636.3 M615.8,631.4L608.8,622.1 M605.8,623.5L601.0,617.4 M776.2,619.7L784.9,609.4 M758.0,635.0L764.9,626.1 M768.2,627.6L773.0,621.9 M732.1,646.8L736.5,639.2 M700.5,652.5L701.8,645.4 M669.7,658.2L666.4,656.1 M640.5,649.3L632.5,645.3 M628.3,642.5L622.3,639.3 M731.4,652.0L739.0,648.8 M701.8,659.1L704.2,657.2" stroke="#a2301c"/>
</g>
<mask id="outm" maskUnits="userSpaceOnUse" x="0" y="0" width="947" height="673"><rect x="0" y="0" width="947" height="673" fill="#fff"/><path d="M479.8,461.1 L476.2,456.3 L472.9,451.5 L469.7,446.6 L466.9,441.6 L464.3,436.6 L461.9,431.5 L459.8,426.3 L458.0,421.2 L456.5,416.0 L455.2,410.8 L454.2,405.5 L453.5,400.3 L453.1,395.0 L452.9,389.8 L453.0,384.7 L453.4,379.6 L454.0,374.5 L455.0,369.4 L456.2,364.4 L457.7,359.4 L459.4,354.5 L461.4,349.6 L463.7,344.7 L466.3,340.0 L469.1,335.3 L472.1,330.6 L475.4,326.1 L479.0,321.6 L482.8,317.2 L486.9,312.9 L491.1,308.7 L495.7,304.6 L500.4,300.6 L505.4,296.8 L510.5,293.0 L515.9,289.4 L521.5,285.9 L527.3,282.5 L533.3,279.3 L539.4,276.2 L545.8,273.2 L552.3,270.4 L558.9,267.7 L565.7,265.2 L572.7,262.9 L579.8,260.7 L587.0,258.6 L594.3,256.7 L601.7,255.0 L609.3,253.5 L616.9,252.1 L624.6,250.9 L632.4,249.8 L640.3,249.0 L648.2,248.3 L656.2,247.7 L664.2,247.4 L672.2,247.2 L680.2,247.2 L688.3,247.4 L696.4,247.8 L704.4,248.3 L712.4,249.0 L720.4,249.9 L728.4,250.9 L736.3,252.1 L744.2,253.5 L752.0,255.1 L759.7,256.8 L767.3,258.7 L774.9,260.8 L782.3,263.0 L789.6,265.3 L796.8,267.9 L803.9,270.5 L810.9,273.4 L817.7,276.3 L824.3,279.4 L830.8,282.7 L837.2,286.1 L843.3,289.6 L849.3,293.2 L855.1,297.0 L860.7,300.8 L866.1,304.8 L871.2,308.9 L876.2,313.1 L880.9,317.4 L885.5,321.8 L889.7,326.3 L893.8,330.8 L897.6,335.5 L901.2,340.2 L904.5,345.0 L907.5,349.8 L910.3,354.7 L912.9,359.6 L915.2,364.6 L917.2,369.7 L918.9,374.7 L920.4,379.8 L921.6,384.9 L922.6,390.0 L923.2,395.1 L923.6,400.3 L923.7,405.4 L923.5,410.4 L923.1,415.3 L922.4,420.3 L921.4,425.2 L920.1,430.1 L918.6,435.0 L916.8,439.8 L914.7,444.6 L912.3,449.3 L909.7,454.0 L906.9,458.6 L903.7,463.1 L900.4,467.5 L896.8,471.9 L890.6,479.1 L884.4,486.3 L878.2,493.5 L872.0,500.7 L865.8,507.9 L859.7,515.1 L853.5,522.3 L847.3,529.6 L841.1,536.8 L834.9,544.1 L828.8,551.3 L822.6,558.6 L816.4,565.9 L810.2,573.2 L804.0,580.5 L797.9,587.8 L791.7,595.1 L785.5,602.5 L779.3,609.8 L773.1,617.1 L769.5,620.4 L766.2,623.9 L762.7,627.3 L759.0,630.5 L755.2,633.5 L751.3,636.4 L747.3,639.1 L743.2,641.6 L738.9,643.9 L734.6,646.0 L730.1,648.0 L725.6,649.7 L721.0,651.2 L716.4,652.6 L711.6,653.7 L706.9,654.6 L702.1,655.3 L697.3,655.9 L692.5,656.1 L687.6,656.2 L682.8,656.1 L677.9,655.7 L673.1,655.2 L668.3,654.4 L663.6,653.4 L658.9,652.2 L654.3,650.8 L649.7,649.2 L645.2,647.4 L640.8,645.4 L636.5,643.2 L632.2,640.9 L628.1,638.3 L624.1,635.6 L620.3,632.7 L616.5,629.6 L612.9,626.3 L609.5,622.9 L606.2,619.4 L603.5,615.4 L597.3,607.7 L591.1,600.1 L584.9,592.5 L578.7,584.8 L572.6,577.1 L566.4,569.5 L560.2,561.8 L554.0,554.1 L547.8,546.4 L541.7,538.7 L535.5,531.0 L529.3,523.2 L523.1,515.5 L516.9,507.8 L510.8,500.0 L504.6,492.2 L498.4,484.5 L492.2,476.7 L486.0,468.9 L479.8,461.1Z" fill="#000"/></mask>
<g fill="none" stroke-width="1" shape-rendering="crispEdges" mask="url(#outm)">
 <path d="M899.3,376.2L892.9,364.9 M907.8,399.3L904.3,387.6 M913.6,420.7L913.2,409.2 M909.3,447.1L912.1,435.8 M900.7,469.3L906.5,458.5 M886.7,489.7L895.2,479.7 M477.2,461.2L483.5,472.6 M465.0,415.4L465.3,427.4 M467.7,391.0L464.9,402.8 M474.2,365.7L468.4,376.7 M917.3,388.2L914.0,376.5 M919.7,413.7L919.3,402.1 M918.3,435.6L920.9,424.3 M909.7,458.1L915.2,447.3 M896.5,478.3L904.8,468.2 M477.2,463.6L484.8,474.7 M463.7,439.6L468.6,451.3 M457.5,392.4L456.4,404.4 M462.2,368.3L458.1,379.7 M891.6,411.4L886.9,400.1 M896.6,436.8L895.4,425.3 M889.2,481.4L894.4,470.5 M874.8,503.6L883.0,493.5 M491.0,478.6L497.2,490.0 M481.9,454.2L484.7,466.1 M478.4,428.2L477.9,440.2 M482.2,405.5L478.7,417.2 M896.3,398.4L891.2,386.9 M904.2,419.6L902.1,408.2 M904.3,443.8L905.4,432.3 M888.9,486.2L896.0,475.7 M484.9,471.5L491.4,482.9 M476.1,450.6L479.8,462.4 M471.9,426.5L472.4,438.5 M473.0,400.5L470.3,412.3 M482.5,380.1L476.8,391.1 M881.7,443.1L878.8,431.6 M883.5,466.8L884.1,455.3 M879.4,488.9L883.3,477.8 M867.8,510.9L875.0,500.5 M513.4,509.6L521.5,520.5 M500.2,486.1L504.9,497.8 M493.7,461.1L494.8,473.1 M496.0,440.5L493.8,452.3 M887.8,433.3L884.7,421.8 M891.0,457.2L891.5,445.7 M886.8,478.7L890.5,467.5 M876.4,500.5L883.4,490.0 M498.7,489.0L505.2,500.4 M487.5,462.0L490.4,473.9 M486.7,441.0L486.3,453.0 M489.2,414.6L485.4,426.3 M862.1,457.5L857.7,446.2 M867.5,481.3L867.0,469.7 M855.6,524.9L862.6,514.4 M526.1,525.3L533.9,536.3 M513.9,502.6L518.2,514.3 M512.0,453.9L508.5,465.6 M868.8,443.5L863.9,432.2 M874.7,465.8L873.4,454.2 M874.7,488.2L877.2,476.8 M521.0,519.2L529.4,530.0 M506.7,495.1L511.6,506.8 M501.3,447.3L498.9,459.1 M508.2,424.4L502.5,435.7 M852.8,486.0L850.0,474.5 M852.2,513.6L854.0,502.2 M845.9,533.6L851.4,522.7 M532.6,532.0L539.1,543.3 M523.8,508.9L526.3,520.8 M522.6,483.8L520.9,495.7 M531.3,462.6L525.5,473.8 M860.6,475.5L857.9,464.0 M861.5,500.1L862.9,488.6 M854.9,522.8L860.3,511.8 M520.7,512.4L525.3,524.1 M516.3,488.4L516.7,500.4 M517.3,463.3L514.0,475.0 M835.8,502.5L832.0,491.1 M839.1,524.9L839.6,513.3 M548.1,551.3L554.5,562.6 M538.9,525.8L540.6,537.8 M539.7,502.7L537.0,514.5 M841.3,485.0L836.4,473.8 M845.6,510.7L845.1,499.1 M842.7,533.2L846.5,521.9 M540.5,542.4L547.3,553.6 M530.6,518.0L533.1,529.9 M531.6,497.1L529.9,509.0 M536.8,471.7L531.0,482.9 M822.7,533.3L820.6,521.7 M822.2,557.2L825.6,545.9 M811.3,578.0L819.3,567.6 M557.6,559.8L562.2,571.4 M558.1,510.0L552.6,521.3 M831.5,521.4L829.6,509.9 M829.7,546.3L832.6,534.9 M819.8,567.6L827.4,557.2 M554.0,558.9L560.5,570.1 M546.5,537.2L548.5,549.1 M808.2,545.6L804.7,534.1 M808.5,570.8L810.8,559.3 M569.5,572.5L573.0,584.2 M569.3,549.1L566.9,560.8 M812.2,532.1L807.5,520.7 M817.7,553.8L818.5,542.3 M810.2,577.0L816.0,566.1 M563.5,567.4L568.1,579.0 M560.3,544.1L559.5,556.0 M566.9,520.6L560.9,531.8 M794.1,578.0L793.1,566.4 M789.5,602.0L795.3,591.0 M588.9,602.9L595.7,614.0 M582.5,581.3L583.1,593.2 M587.1,558.2L581.5,569.5 M803.5,565.4L802.5,553.8 M797.5,591.1L802.4,579.9 M577.2,583.1L580.9,594.8 M573.5,557.5L571.5,569.3 M777.0,593.0L774.2,581.4 M777.0,614.6L781.8,603.4 M605.1,620.7L611.8,631.8 M599.2,597.2L598.3,609.0 M786.0,576.2L782.1,564.8 M786.3,599.1L788.5,587.6 M597.5,613.9L604.9,624.9 M587.7,589.4L588.7,601.3 M755.5,607.1L751.3,595.7 M751.5,633.2L758.2,622.4 M769.8,615.9L772.7,604.5 M726.2,636.7L731.9,625.6 M647.6,618.7L641.7,629.8 M740.8,632.6L745.3,621.3 M631.4,624.6L632.8,636.4 M700.3,636.2L705.9,625.1 M677.6,637.0L685.6,647.6 M676.1,630.9L670.2,642.1 M714.0,639.5L722.0,629.0 M663.4,636.8L669.1,648.1" stroke="#3a4f6e"/>
</g>
<!-- R-dir arrow -->
<line x1="687.5" y1="485" x2="687.5" y2="433" stroke="#7a0a0a" stroke-width="2.6"/>
<path d="M683.5,436 L687.7,421.5 L692.8,436 Z" fill="#6a0000"/>
<text x="693.5" y="423" font-family="Liberation Sans" font-weight="700" font-size="13.3" textLength="32" lengthAdjust="spacingAndGlyphs" fill="#000">R-dir</text>
<!-- S-dir arrow -->
<line x1="780.7" y1="585.7" x2="817" y2="645" stroke="#ff00ff" stroke-width="2.4"/>
<path d="M812.3,645.8 L822.3,640.3 L825.5,656.5 Z" fill="#c000cc"/>
<path d="M817.3,643 L822.3,640.3 L825.5,656.5 Z" fill="#e040f0"/>
<text x="828.7" y="654" font-family="Liberation Sans" font-weight="700" font-size="13.5" textLength="32" lengthAdjust="spacingAndGlyphs" fill="#000">S-dir</text>
<!-- triad -->
<line x1="863.7" y1="625" x2="863.7" y2="596" stroke="#109010" stroke-width="1.1"/>
<path d="M860,596.8 L867.8,596.8 L864,585 Z" fill="#0b6e0b"/>
<line x1="863.7" y1="624.7" x2="894" y2="610.5" stroke="#ff2a2a" stroke-width="1.1"/>
<path d="M892.3,606.3 L896.8,613.8 L905.2,604.8 Z" fill="#d00000"/>
<line x1="863.7" y1="624.7" x2="887.5" y2="645" stroke="#3030ff" stroke-width="1.1"/>
<path d="M884.3,648.8 L891,642.8 L895.6,652.6 Z" fill="#0000d8"/>
<text x="864.2" y="578" font-family="Liberation Sans" font-weight="700" font-size="16" fill="#20a020">Y</text>
<text x="911.6" y="601.5" font-family="Liberation Sans" font-weight="700" font-size="16" fill="#ff1010">X</text>
<text x="900.5" y="657.5" font-family="Liberation Sans" font-weight="700" font-size="16" fill="#1010ff">Z</text>
</svg>
<!-- left dialog -->
<div class="abs" style="left:0;top:0;width:446px;height:1px;background:#f2f2f2;"></div>
<div class="abs" style="left:0;top:0;width:1px;height:673px;background:#d5d5d5;"></div>
<div class="abs" style="left:1px;top:1px;width:445px;height:671px;border:1px solid #c4c4c4;border-radius:6px;background:#f0f0f0;overflow:hidden;box-shadow:inset 0 0 0 1px #f6f6f6;">
  <div class="abs" style="left:1px;top:1px;width:441px;height:26px;background:#f3f3f3;"></div>
</div>
<svg class="abs" style="left:0;top:0" width="947" height="673" viewBox="0 0 947 673">
<!-- title icon -->
<path d="M8,12.4 L8,14.7 L15,17.6 L22.3,14.7 L22.3,12.4 Z" fill="#3f93ea"/>
<path d="M9.3,14.3 L15,16.6 L21,14.3" fill="none" stroke="#cfe3f8" stroke-width="0.7"/>
<path d="M8,12.4 L15,9.6 L22.3,12.4 L15,15.2 Z" fill="#0b50a8"/>
<path d="M15,6.6 L17,8.4 L15.8,8.4 L15.8,10 L14.2,10 L14.2,8.4 L13,8.4 Z" fill="#1a6ccc"/>
<path d="M15,21 L17,19.2 L15.8,19.2 L15.8,17.4 L14.2,17.4 L14.2,19.2 L13,19.2 Z" fill="#1a6ccc"/>
<!-- close -->
<path d="M428.3,9.3 L436.7,17.7 M436.7,9.3 L428.3,17.7" stroke="#6d8787" stroke-width="1"/>
<!-- group box -->
<path d="M15,42.5 L11.5,42.5 L11.5,83.5 L435.5,83.5 L435.5,42.5 L130,42.5" fill="none" stroke="#d6d6d6" stroke-width="1"/>
<!-- edit button -->
<rect x="21.5" y="58.5" width="60" height="15.5" rx="3" fill="#fbfbfb" stroke="#e6e6e6"/>
<!-- listbox -->
<rect x="11.5" y="115.5" width="424" height="170" fill="#f0f0f0" stroke="#6d90cc"/>
<rect x="29" y="116" width="405.5" height="16.5" rx="2" fill="#cacaca"/>
<path d="M31.5,124.5 L38.5,121 L45.5,124.5 L38.5,128 Z" fill="#78a9e4"/>
<!-- checkbox -->
<rect x="13.5" y="291.5" width="10" height="10" rx="2" fill="#f7f7f7" stroke="#bdbdbd"/>
<!-- zoom / delete icons -->
<circle cx="404.5" cy="295.5" r="4.5" fill="none" stroke="#a3c9ee" stroke-width="1.2"/>
<path d="M402,295.5 L407,295.5 M404.5,293 L404.5,298" stroke="#a3c9ee" stroke-width="1.5"/>
<path d="M407.6,298.8 L409.8,302.2" stroke="#a3c9ee" stroke-width="1.4"/>
<path d="M420.6,293.2 L427.6,300.2 M427.6,293.2 L420.6,300.2" stroke="#a9d0f1" stroke-width="2.7"/>
<!-- dropdown -->
<rect x="105" y="317" width="49" height="15" rx="2" fill="#fafafa"/>
<path d="M143.5,323.5 L147,327 L150.5,323.5" fill="none" stroke="#9a9a9a" stroke-width="1"/>
<!-- table -->
<rect x="11.5" y="354.5" width="424" height="169" fill="#f0f0f0" stroke="#6d90cc"/>
<line x1="12" y1="354.5" x2="435" y2="354.5" stroke="#98b3dd"/>
<rect x="12" y="355" width="423" height="18.7" fill="#ffffff"/>
<path d="M46.5,355 L46.5,373.5 M131.5,355 L131.5,373.5 M216.5,355 L216.5,373.5 M317.5,355 L317.5,373.5 M417.5,355 L417.5,373.5" stroke="#e8e8e8"/>
<rect x="12" y="374" width="17" height="15" fill="#ebebeb"/>
<rect x="29" y="374.3" width="405.5" height="14.5" rx="2" fill="#cacaca"/>
<!-- table toolbar icons -->
<path d="M355.5,539.5 L360,530.5 L364.5,539.5 Z" fill="#a9ccee"/>
<path d="M375,530.5 L384,530.5 L379.5,539.5 Z" fill="#a9ccee"/>
<path d="M395,532 L401.5,532 L401.5,541.5 L395,541.5 Z" fill="#b8d6f2"/>
<path d="M398,529 L402.6,529 L405.2,531.6 L405.2,539.6 L398,539.6 Z" fill="#a8ccee"/>
<path d="M402.6,529 L402.6,531.6 L405.2,531.6 Z" fill="#eef5fc"/>
<line x1="411.5" y1="528" x2="411.5" y2="542" stroke="#c8c8c8"/>
<path d="M420.3,531.3 L428.2,539.2 M428.2,531.3 L420.3,539.2" stroke="#a9ccee" stroke-width="2.8" stroke-linecap="round"/>
<!-- show ply checkbox (checked, disabled) -->
<rect x="11.5" y="560.5" width="10" height="10" rx="2" fill="#c9c9c9" stroke="#c4c4c4"/>
<path d="M13.8,565.5 L16,567.7 L19.5,563.5" fill="none" stroke="#ececec" stroke-width="1.1"/>
<!-- info box -->
<rect x="11.5" y="584.5" width="424" height="23" fill="#f0f0f0" stroke="#a8a8a8"/>
<path d="M12,607.5 L435,607.5 M435.5,585 L435.5,607" stroke="#e3e3e3"/>
<!-- help button -->
<rect x="13" y="622" width="20" height="17" rx="3" fill="#f6f6f6" stroke="#e6e6e6"/>
<text x="22.2" y="636.3" text-anchor="middle" font-family="Liberation Sans" font-weight="700" font-size="15.5" fill="#acd1f1">?</text>
<!-- cancel / ok -->
<rect x="305" y="622" width="60" height="16" rx="3" fill="#fbfbfb" stroke="#e6e6e6"/>
<rect x="374" y="622" width="60" height="16" rx="3" fill="#fbfbfb" stroke="#e6e6e6"/>
<!-- status bar -->
<rect x="11" y="646" width="425" height="17" fill="#ffffff"/>
</svg>
<!-- small dialog -->
<div class="abs" style="left:563px;top:78px;width:181px;height:161px;border-radius:7px;box-shadow:0 5px 22px rgba(0,0,0,0.26);"></div>
<div class="abs" style="left:562px;top:78px;width:182px;height:161px;border:1px solid #bcbcbc;border-radius:7px;background:#f0f0f0;overflow:hidden;">
  <div class="abs" style="left:0;top:0;width:180px;height:25px;background:#f3f3f3;"></div>
</div>
<svg class="abs" style="left:0;top:0" width="947" height="673" viewBox="0 0 947 673">
<!-- icon -->
<rect x="575.2" y="85" width="1.8" height="1.8" fill="#1f72d0"/>
<rect x="575.2" y="88" width="1.8" height="3.6" fill="#1f72d0"/>
<path d="M576.1,91.2 L573.2,93.3 M576.1,91.2 L579,93.3" stroke="#1565c8" stroke-width="1.6" fill="none"/>
<rect x="570.5" y="93" width="1.8" height="2.7" fill="#1f72d0"/>
<rect x="580" y="93" width="1.8" height="2.7" fill="#1f72d0"/>
<!-- close -->
<path d="M726.3,86.7 L734.7,95 M734.7,86.7 L726.3,95" stroke="#6d8787" stroke-width="1"/>
<!-- inputs -->
<rect x="587" y="119" width="141.5" height="15.5" rx="2" fill="#ffffff"/>
<line x1="587.5" y1="134" x2="728" y2="134" stroke="#8a8a8a" stroke-width="1.2"/>
<rect x="587" y="140.3" width="141.5" height="15.5" rx="2" fill="#ffffff"/>
<line x1="587.5" y1="155.3" x2="728" y2="155.3" stroke="#8a8a8a" stroke-width="1.2"/>
<rect x="587" y="161.4" width="141.5" height="15.5" rx="2" fill="#ffffff"/>
<line x1="587.5" y1="176.3" x2="728" y2="176.3" stroke="#8a8a8a" stroke-width="1.2"/>
<!-- buttons -->
<rect x="574" y="188.5" width="20.5" height="17" rx="3" fill="#fdfdfd" stroke="#d2d2d2"/>
<text transform="translate(583.3,202.9) scale(0.86,1)" text-anchor="middle" font-family="Liberation Sans" font-weight="700" font-size="16.5" fill="#1a62c0">?</text>
<rect x="602.5" y="188.5" width="61" height="17" rx="3" fill="#fdfdfd" stroke="#d2d2d2"/>
<rect x="671.5" y="188.5" width="61" height="17" rx="3" fill="#fdfdfd" stroke="#d2d2d2"/>
<!-- status -->
<rect x="572" y="212.3" width="162.2" height="16.7" fill="#ffffff"/>
</svg>
<div class="t" style="left:27.1px;top:9.54px;font-size:10px;color:#8a8a8a;font-weight:400;">Create laminate</div>
<div class="t" style="left:17.9px;top:37.96px;font-size:9.5px;color:#101030;font-weight:400;transform:scaleX(0.9773);-webkit-text-stroke:0.25px currentColor;">Reference direction (R-dir)</div>
<div class="t" style="left:42.8px;top:61.53px;font-size:10px;color:#45457a;font-weight:400;transform:scaleX(0.8994);">Edit</div>
<div class="t" style="left:10.8px;top:100.96px;font-size:9.5px;color:#3a3a66;font-weight:400;transform:scaleX(0.9559);">Apply to skin</div>
<div class="t" style="left:49.8px;top:120.53px;font-size:10px;color:#0a0a0a;font-weight:400;transform:scaleX(0.9460);-webkit-text-stroke:0.25px currentColor;">Surface 1</div>
<div class="t" style="left:27.8px;top:291.96px;font-size:9.5px;color:#3a3a66;font-weight:400;transform:scaleX(0.9514);">Include all instances</div>
<div class="t" style="left:10.6px;top:320.96px;font-size:9.5px;color:#3a3a66;font-weight:400;transform:scaleX(0.9557);">Stack direction (S-dir)</div>
<div class="t" style="left:106.4px;top:320.54px;font-size:10px;color:#45457a;font-weight:400;transform:scaleX(0.9426);">Top</div>
<div class="t" style="left:10.6px;top:339.96px;font-size:9.5px;color:#3a3a66;font-weight:400;transform:scaleX(0.9312);">Ply stack</div>
<div class="t" style="left:15.1px;top:359.96px;font-size:9.5px;color:#5f4a6a;font-weight:400;transform:scaleX(1.0331);">Order</div>
<div class="t" style="left:50.6px;top:359.96px;font-size:9.5px;color:#5f4a6a;font-weight:400;transform:scaleX(1.0575);">Name</div>
<div class="t" style="left:135.4px;top:359.96px;font-size:9.5px;color:#5f4a6a;font-weight:400;transform:scaleX(1.0659);">Thickness [mm]</div>
<div class="t" style="left:220.5px;top:359.96px;font-size:9.5px;color:#5f4a6a;font-weight:400;transform:scaleX(1.0652);">Material</div>
<div class="t" style="left:321.0px;top:359.96px;font-size:9.5px;color:#5f4a6a;font-weight:400;transform:scaleX(1.0804);">Orientation [Deg]</div>
<div class="t" style="left:31.5px;top:377.96px;font-size:9.5px;color:#1b1b1b;font-weight:400;-webkit-text-stroke:0.25px currentColor;">1</div>
<div class="t" style="left:48.9px;top:377.96px;font-size:9.5px;color:#1b1b1b;font-weight:400;transform:scaleX(0.9941);-webkit-text-stroke:0.25px currentColor;">Ply 1</div>
<div class="t" style="left:135.0px;top:377.96px;font-size:9.5px;color:#1b1b1b;font-weight:400;-webkit-text-stroke:0.25px currentColor;">1</div>
<div class="t" style="left:219.3px;top:377.96px;font-size:9.5px;color:#1414e0;font-weight:400;transform:scaleX(1.1144);text-decoration:underline;">Curved top</div>
<div class="t" style="left:319.6px;top:377.96px;font-size:9.5px;color:#1b1b1b;font-weight:400;transform:scaleX(1.0115);-webkit-text-stroke:0.25px currentColor;">90</div>
<div class="t" style="left:29.1px;top:390.96px;font-size:9.5px;color:#1414e0;font-weight:400;transform:scaleX(1.1014);text-decoration:underline;">Add ply</div>
<div class="t" style="left:25.5px;top:560.96px;font-size:9.5px;color:#3a3a66;font-weight:400;transform:scaleX(0.9747);">Show ply orientation</div>
<div class="t" style="left:13.9px;top:586.96px;font-size:9.5px;color:#40407a;font-weight:400;transform:scaleX(0.9530);">Stack thickness: 1 [mm]</div>
<div class="t" style="left:13.9px;top:597.96px;font-size:9.5px;color:#40407a;font-weight:400;transform:scaleX(0.9719);">Approximate stack mass: 0.0394371 [kg]</div>
<div class="t" style="left:320.5px;top:625.53px;font-size:10px;color:#45457a;font-weight:400;transform:scaleX(0.8606);">Cancel</div>
<div class="t" style="left:396.8px;top:625.53px;font-size:10px;color:#45457a;font-weight:400;transform:scaleX(0.8510);">OK</div>
<div class="t" style="left:16.5px;top:650.53px;font-size:10px;color:#553a58;font-weight:400;transform:scaleX(1.0078);">Create the plies of the laminate. Rearrange order by up/down arrows or by drag and drop.</div>
<div class="t" style="left:587.8px;top:86.53px;font-size:10px;color:#8a8a8a;font-weight:400;">Reference direction</div>
<div class="t" style="left:575.5px;top:122.96px;font-size:9.5px;color:#1b1b1b;font-weight:400;transform:scaleX(0.8985);-webkit-text-stroke:0.3px #1b1b1b;">X</div>
<div class="t" style="left:575.5px;top:143.96px;font-size:9.5px;color:#1b1b1b;font-weight:400;transform:scaleX(0.8985);-webkit-text-stroke:0.3px #1b1b1b;">Y</div>
<div class="t" style="left:575.5px;top:164.96px;font-size:9.5px;color:#1b1b1b;font-weight:400;transform:scaleX(0.9806);-webkit-text-stroke:0.3px #1b1b1b;">Z</div>
<div class="t" style="left:588.8px;top:122.96px;font-size:9.5px;color:#1b1b1b;font-weight:400;-webkit-text-stroke:0.3px #1b1b1b;">0</div>
<div class="t" style="left:588.8px;top:143.96px;font-size:9.5px;color:#1b1b1b;font-weight:400;-webkit-text-stroke:0.3px #1b1b1b;">1</div>
<div class="t" style="left:588.8px;top:164.96px;font-size:9.5px;color:#1b1b1b;font-weight:400;-webkit-text-stroke:0.3px #1b1b1b;">0</div>
<div class="t" style="left:618.6px;top:191.53px;font-size:10px;color:#1b1b1b;font-weight:400;transform:scaleX(0.8735);-webkit-text-stroke:0.25px currentColor;">Cancel</div>
<div class="t" style="left:694.8px;top:191.53px;font-size:10px;color:#1b1b1b;font-weight:400;transform:scaleX(0.8579);-webkit-text-stroke:0.25px currentColor;">OK</div>
<div class="t" style="left:577.4px;top:216.53px;font-size:10px;color:#1b1b1b;font-weight:400;-webkit-text-stroke:0.25px currentColor;">Edit reference direction</div>
</body></html>
